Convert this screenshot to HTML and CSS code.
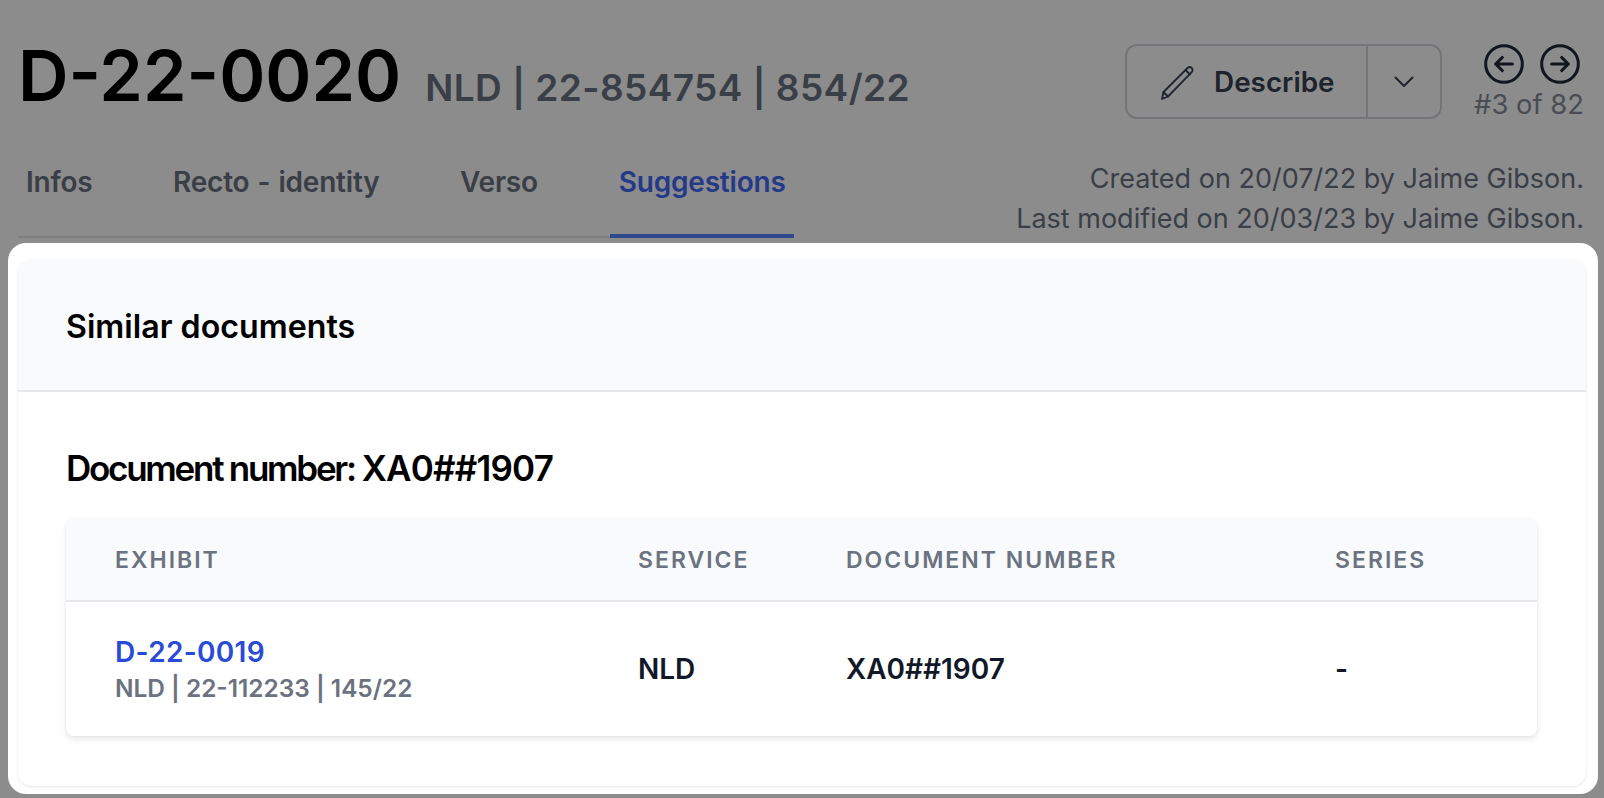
FILE: index.html
```html
<!DOCTYPE html>
<html lang="en">
<head>
<meta charset="utf-8">
<title>D-22-0020</title>
<link rel="stylesheet" href="styles.css">
</head>
<body>
<div class="page">
  <header class="head">
    <div class="title-row">
      <h1 class="title">D-22-0020</h1>
      <span class="subtitle">NLD | 22-854754 | 854/22</span>
    </div>
    <div class="actions">
      <div class="btn-group">
        <button class="btn-main">
          <svg class="pencil" viewBox="0 0 36 36" fill="none" stroke="currentColor" stroke-width="1.8" stroke-linejoin="round" stroke-linecap="round"><path d="M2 35l1.500-7L27.500 4c1.200-1.200 3-1.200 4.200 0 1.200 1.200 1.200 3 0 4.200L8 32.500z"/><path d="M3.500 28L8 32.500M25.500 6l4.500 4.500"/></svg>
          <span>Describe</span>
        </button>
        <button class="btn-caret" aria-label="More">
          <svg viewBox="0 0 20 12" fill="none" stroke="currentColor" stroke-width="2" stroke-linecap="round" stroke-linejoin="round"><path d="M1.500 1.500L10 10l8.500-8.500"/></svg>
        </button>
      </div>
      <div class="pager">
        <div class="pager-icons">
          <svg viewBox="0 0 24 24" fill="none" stroke="currentColor" stroke-width="1.800" stroke-linecap="round" stroke-linejoin="round"><circle cx="12" cy="12" r="11"/><path d="M11 8l-4 4 4 4M7 12h10"/></svg>
          <svg viewBox="0 0 24 24" fill="none" stroke="currentColor" stroke-width="1.800" stroke-linecap="round" stroke-linejoin="round"><circle cx="12" cy="12" r="11"/><path d="M13 8l4 4-4 4M17 12H7"/></svg>
        </div>
        <div class="pager-count">#3 of 82</div>
      </div>
    </div>
  </header>
  <div class="sub-row">
    <nav class="tabs">
      <a class="tab">Infos</a>
      <a class="tab">Recto - identity</a>
      <a class="tab">Verso</a>
      <a class="tab active">Suggestions</a>
    </nav>
    <div class="meta">
      <div>Created on 20/07/22 by Jaime Gibson.</div>
      <div>Last modified on 20/03/23 by Jaime Gibson.</div>
    </div>
  </div>
</div>
<div class="overlay"></div>
<section class="spotlight">
  <div class="card">
    <div class="card-head">Similar documents</div>
    <div class="card-body">
      <h2 class="group-title"><span class="group-label">Document number:</span> <span class="group-value">XA0##1907</span></h2>
      <table class="docs">
        <colgroup><col class="c1"><col class="c2"><col class="c3"><col class="c4"></colgroup>
        <thead>
          <tr><th>Exhibit</th><th>Service</th><th>Document number</th><th>Series</th></tr>
        </thead>
        <tbody>
          <tr>
            <td><a class="doc-link">D-22-0019</a><div class="doc-sub">NLD | 22-112233 | 145/22</div></td>
            <td>NLD</td>
            <td>XA0##1907</td>
            <td>-</td>
          </tr>
        </tbody>
      </table>
    </div>
  </div>
</section>
</body>
</html>
```
FILE: styles.css
```css
* { box-sizing: border-box; }
html, body { margin: 0; height: 100%; overflow: hidden; }
body {
  background: #fff;
  font-family: Inter, "Liberation Sans", sans-serif;
  color: #111827;
  width: 1604px;
  height: 798px;
  position: relative;
}
.page { padding: 44px 20px 0 18px; }
.head { display: flex; justify-content: space-between; align-items: flex-start; height: 75px; }
.title-row { display: flex; align-items: baseline; gap: 24px; margin-top: -7px; }
.title { margin: 0; font-size: 70px; line-height: 77px; font-weight: 600; color: #000; letter-spacing: 0; }
.subtitle { font-size: 37px; font-weight: 600; color: #6b7280; letter-spacing: 0.4px; }
.actions { display: flex; align-items: flex-start; gap: 32px; }
.btn-group { display: flex; width: 317px; height: 75px; border: 2px solid #d1d5db; border-radius: 12px; background: #fff; }
.btn-main, .btn-caret { background: none; border: 0; padding: 0; font: inherit; color: #374151; display: flex; align-items: center; }
.btn-main { width: 241px; border-right: 2px solid #d1d5db; padding-left: 33px; gap: 18px; font-size: 27.8px; font-weight: 600; color: #374151; }
.pencil { width: 36px; height: 36px; }
.btn-caret { flex: 1; justify-content: center; color: #374151; }
.btn-caret svg { width: 20px; height: 12px; }
.pager { display: flex; flex-direction: column; align-items: flex-end; color: #1f2937; }
.pager-icons { display: flex; gap: 16px; padding-right: 4px; }
.pager-icons svg { width: 40px; height: 40px; display: block; }
.pager-count { font-size: 27.4px; line-height: 36px; margin-top: 2px; color: #858b96; }
.sub-row { display: flex; justify-content: space-between; align-items: flex-start; margin-top: 35px; }
.tabs { display: flex; width: 776px; border-bottom: 2px solid #e5e7eb; height: 84px; align-items: stretch; }
.tab { padding: 0 8px; font-size: 28px; font-weight: 600; color: #6b7280; height: 84px; line-height: 56px; border-bottom: 4px solid transparent; margin-right: 64.5px; white-space: nowrap; letter-spacing: -0.2px; word-spacing: 1.2px; }
.tab.active { color: #436bf9; border-bottom-color: #5483ff; margin-right: 0; width: 184px; text-align: center; }
.meta { text-align: right; font-size: 27px; line-height: 40px; color: #6b7280; margin-top: 5px; }
.overlay { position: absolute; inset: 0; background: rgba(0, 0, 0, 0.45); }
.spotlight { position: absolute; left: 8px; top: 243px; width: 1590px; height: 551px; background: #fff; border-radius: 18px; padding: 16px 12px 8px 10px; }
.card { height: 100%; border-radius: 14px; background: #fff; box-shadow: 0 1px 3px rgba(0,0,0,.1); overflow: hidden; }
.card-head { height: 133px; background: #f9fafb; border-bottom: 2px solid #e5e7eb; padding: 3px 0 0 48px; display: flex; align-items: center; font-size: 32.2px; font-weight: 600; color: #000; }
.card-body { padding: 54px 48px 0 48px; }
.group-title { margin: 0 0 29px; font-size: 35px; line-height: 44px; font-weight: 600; color: #000; word-spacing: -2px; }
.group-label { letter-spacing: -2.27px; word-spacing: 0; }
.group-value { letter-spacing: -0.8px; }
.docs { width: 1471px; table-layout: fixed; border-collapse: separate; border-spacing: 0; border-radius: 8px; box-shadow: 0 3px 6px rgba(0,0,0,.1), 0 0 2px rgba(0,0,0,.05); }
.c1 { width: 572px; } .c2 { width: 208px; } .c3 { width: 489px; } .c4 { width: 202px; }
.docs th { background: #f9fafb; height: 83px; padding: 0; border-bottom: 2px solid #e5e7eb; text-align: left; font-size: 23px; font-weight: 600; letter-spacing: 2px; text-transform: uppercase; color: #6b7280; }
.docs th:first-child, .docs td:first-child { padding-left: 49px; }
.docs td:first-child { padding-top: 2px; }
.docs th:first-child { border-top-left-radius: 8px; }
.docs th:last-child { border-top-right-radius: 8px; }
.docs td { height: 134px; padding: 0; font-size: 28px; font-weight: 600; color: #111827; }
.doc-link { display: block; font-size: 28px; line-height: 36px; letter-spacing: 0.3px; color: #2a4bd7; }
.doc-sub { font-size: 24.4px; line-height: 36px; color: #6b7280; }
```
